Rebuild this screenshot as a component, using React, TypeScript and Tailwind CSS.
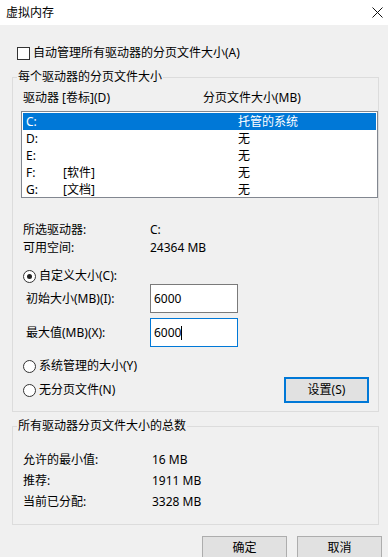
export default function App() {
  const drives = [
    { letter: "C:", label: "", size: "托管的系统", selected: true },
    { letter: "D:", label: "", size: "无", selected: false },
    { letter: "E:", label: "", size: "无", selected: false },
    { letter: "F:", label: "[软件]", size: "无", selected: false },
    { letter: "G:", label: "[文档]", size: "无", selected: false },
  ];

  return (
    <div className="w-[388px] h-[557px] overflow-hidden bg-[#f0f0f0] text-[12px] leading-[16px] text-black font-['Noto_Sans','Noto_Sans_CJK_SC',sans-serif]">
      {/* title bar */}
      <div className="h-[25px] bg-white flex items-center justify-between pl-[6px] pr-[5px]">
        <span>虚拟内存</span>
        <svg width="11" height="11" viewBox="0 0 11 11" className="mt-[-1px]">
          <path d="M0.5 0.5 L10.5 10.5 M10.5 0.5 L0.5 10.5" stroke="#111" strokeWidth="1" fill="none" />
        </svg>
      </div>

      {/* auto manage */}
      <div className="mt-[21px] h-[14px] flex items-center pl-[17px] gap-[3px]">
        <div className="w-[13px] h-[13px] border border-[#333] bg-white" />
        <span>自动管理所有驱动器的分页文件大小(A)</span>
      </div>

      {/* per drive group */}
      <fieldset className="mt-[9px] ml-[12px] mr-[9px] border border-[#dcdcdc] pb-[8px]">
        <legend className="ml-[4px] px-[1px] leading-[16px]">每个驱动器的分页文件大小</legend>
        <div className="mt-[5px] h-[16px] flex pl-[10px]">
          <span className="w-[180px]">驱动器 [卷标](D)</span>
          <span>分页文件大小(MB)</span>
        </div>
        <div className="mt-[5px] ml-[8px] h-[87px] border border-[#828790] bg-white p-[1px]">
          {drives.map((d) => (
            <div
              key={d.letter}
              className={
                d.selected
                  ? "h-[17px] flex items-center pl-[3px] bg-[#0078d7] text-white"
                  : "h-[17px] flex items-center pl-[3px]"
              }
            >
              <span className="w-[37px]">{d.letter}</span>
              <span className="w-[175px]">{d.label}</span>
              <span>{d.size}</span>
            </div>
          ))}
        </div>

        <div className="mt-[23px] pl-[10px]">
          <div className="h-[18px] flex items-center">
            <span className="w-[127px]">所选驱动器:</span>
            <span>C:</span>
          </div>
          <div className="h-[18px] flex items-center">
            <span className="w-[127px]">可用空间:</span>
            <span>24364 MB</span>
          </div>
        </div>

        <div className="mt-[11px] h-[16px] flex items-center pl-[10px] gap-[3px]">
          <div className="w-[13px] h-[13px] rounded-full border border-[#333] bg-white flex items-center justify-center">
            <div className="w-[5px] h-[5px] rounded-full bg-[#222]" />
          </div>
          <span>自定义大小(C):</span>
        </div>

        <div className="h-[29px] flex items-center pl-[13px]">
          <span className="w-[124px] pt-[-2px]">初始大小(MB)(I):</span>
          <div className="w-[88px] h-[29px] border border-[#7a7a7a] bg-white flex items-center pl-[3px]">
            6000
          </div>
        </div>
        <div className="mt-[5px] h-[29px] flex items-center pl-[13px]">
          <span className="w-[124px]">最大值(MB)(X):</span>
          <div className="w-[88px] h-[29px] border border-[#0078d7] bg-white flex items-center pl-[3px]">
            <span>6000</span>
            <span className="w-[1px] h-[14px] bg-black" />
          </div>
        </div>

        <div className="mt-[11px] h-[16px] flex items-center pl-[10px] gap-[3px]">
          <div className="w-[13px] h-[13px] rounded-full border border-[#333] bg-white" />
          <span>系统管理的大小(Y)</span>
        </div>

        <div className="mt-[3px] h-[26px] flex items-center pl-[10px]">
          <div className="flex items-center gap-[3px]">
            <div className="w-[13px] h-[13px] rounded-full border border-[#333] bg-white" />
            <span>无分页文件(N)</span>
          </div>
          <button className="ml-auto mr-[9px] w-[85px] h-[26px] border-2 border-[#0078d7] bg-[#e1e1e1] flex items-center justify-center">
            设置(S)
          </button>
        </div>
      </fieldset>

      {/* totals group */}
      <fieldset className="mt-[6px] ml-[12px] mr-[9px] border border-[#dcdcdc] pb-[12px]">
        <legend className="ml-[4px] px-[1px] leading-[16px]">所有驱动器分页文件大小的总数</legend>
        <div className="mt-[15px] pl-[10px]">
          <div className="h-[21px] flex items-center">
            <span className="w-[129px]">允许的最小值:</span>
            <span>16 MB</span>
          </div>
          <div className="h-[21px] flex items-center">
            <span className="w-[129px]">推荐:</span>
            <span>1911 MB</span>
          </div>
          <div className="h-[21px] flex items-center">
            <span className="w-[129px]">当前已分配:</span>
            <span>3328 MB</span>
          </div>
        </div>
      </fieldset>

      {/* dialog buttons */}
      <div className="mt-[11px] flex justify-end gap-[10px] pr-[6px]">
        <button className="w-[85px] h-[23px] border border-[#adadad] bg-[#e1e1e1] flex items-center justify-center">
          确定
        </button>
        <button className="w-[85px] h-[23px] border border-[#adadad] bg-[#e1e1e1] flex items-center justify-center">
          取消
        </button>
      </div>
    </div>
  );
}
